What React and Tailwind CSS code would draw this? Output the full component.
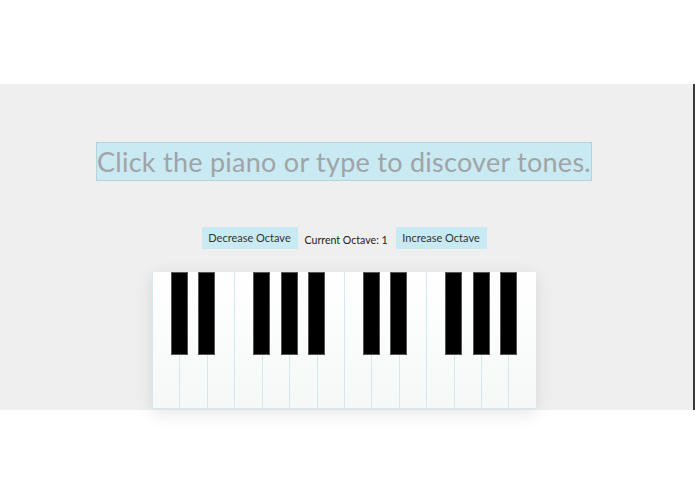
import { useState } from 'react'

const WHITE = 14
const BLACK_AT = [1, 2, 4, 5, 6, 8, 9, 11, 12, 13]

export default function App() {
  const [octave, setOctave] = useState(1)

  return (
    <div className="w-[695px] h-[494px] bg-white" style={{ fontFamily: '"Lato", "Open Sans", sans-serif' }}>
      <div className="h-[84px]" />
      <div className="h-[326px] bg-[#efefef] border-r-2 border-[#3a3a3a] flex flex-col items-center pr-[5px]">
        <h1 className="mt-[58px] h-[39px] w-[496px] flex items-center justify-center bg-[#c9eaf2] border border-[#b5d3da] text-[#a0a4a6] text-[27px] font-normal tracking-[0.26px] leading-none">
          Click the piano or type to discover tones.
        </h1>

        <div className="mt-[46px] flex items-center gap-[7px] text-[11px]">
          <button onClick={() => setOctave((o) => o - 1)} className="h-[22px] w-[96px] bg-[#c9eaf2] text-[#333]">
            Decrease Octave
          </button>
          <span className="w-[84px] text-[10.6px] text-[#222] mt-[5px] whitespace-nowrap">Current Octave: {octave}</span>
          <button onClick={() => setOctave((o) => o + 1)} className="h-[22px] w-[91px] bg-[#c9eaf2] text-[#333]">
            Increase Octave
          </button>
        </div>

        <div className="mt-[23px] relative w-[384px] h-[137px] flex shadow-[0_4px_16px_rgba(0,0,0,0.1)]">
          {Array.from({ length: WHITE }).map((_, i) => (
            <div key={i} className="flex-1 h-full bg-gradient-to-b from-white to-[#f6f8f8] border-l border-b border-[#d5e9ed] last:border-r" />
          ))}
          {BLACK_AT.map((b) => (
            <div
              key={b}
              className="absolute top-0 w-[17px] h-[83px] bg-black border border-[#555]"
              style={{ left: `${(b * 384) / WHITE - 8.5}px` }}
            />
          ))}
        </div>
      </div>
    </div>
  )
}
